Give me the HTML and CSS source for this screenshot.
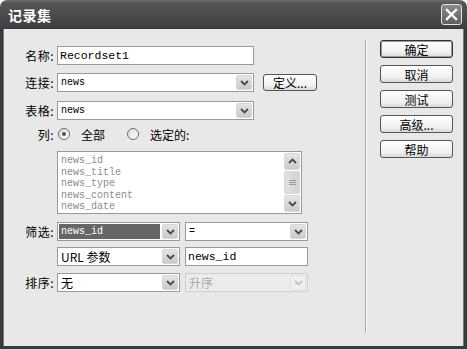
FILE: index.html
```html
<!DOCTYPE html>
<html lang="zh-CN">
<head>
    <meta charset="UTF-8">
    <title>记录集</title>
    <link rel="stylesheet" href="styles.css">
</head>
<body>
    <div class="window">
        <div class="titlebar">
            <span class="title">记录集</span>
            <span class="close">
                <svg width="13" height="13" viewBox="0 0 13 13"><path d="M2 2 L11 11 M11 2 L2 11" stroke="#fff" stroke-width="2.4" stroke-linecap="square"/></svg>
            </span>
        </div>

        <div class="body">
            <div class="form">
                <div class="row r-name">
                    <span class="lbl">名称:</span>
                    <div class="input wide"><span class="mono-lg">Recordset1</span></div>
                </div>

                <div class="row r-conn">
                    <span class="lbl">连接:</span>
                    <div class="select wide">
                        <span class="val mono">news</span>
                        <span class="arrow"><svg width="9" height="6" viewBox="0 0 9 6"><path d="M1 1 L4.5 4.5 L8 1" fill="none" stroke="#4a4a4a" stroke-width="1.8"/></svg></span>
                    </div>
                    <span class="btn define">定义...</span>
                </div>

                <div class="row r-table">
                    <span class="lbl">表格:</span>
                    <div class="select wide">
                        <span class="val mono">news</span>
                        <span class="arrow"><svg width="9" height="6" viewBox="0 0 9 6"><path d="M1 1 L4.5 4.5 L8 1" fill="none" stroke="#4a4a4a" stroke-width="1.8"/></svg></span>
                    </div>
                </div>

                <div class="row r-cols">
                    <span class="lbl">列:</span>
                    <span class="radio checked"></span>
                    <span class="rtext">全部</span>
                    <span class="radio second"></span>
                    <span class="rtext">选定的:</span>
                </div>

                <div class="row r-list">
                    <span class="lbl"></span>
                    <div class="listbox">
                        <div class="items mono">
                            <div>news_id</div>
                            <div>news_title</div>
                            <div>news_type</div>
                            <div>news_content</div>
                            <div>news_date</div>
                        </div>
                        <div class="scrollbar">
                            <span class="sb-btn"><svg width="9" height="6" viewBox="0 0 9 6"><path d="M1 5 L4.5 1.5 L8 5" fill="none" stroke="#4a4a4a" stroke-width="1.8"/></svg></span>
                            <span class="sb-thumb"><svg width="7" height="6" viewBox="0 0 7 6"><path d="M0 0.5 H7 M0 2.5 H7 M0 4.5 H7" stroke="#999" stroke-width="1"/></svg></span>
                            <span class="sb-btn sb-down"><svg width="9" height="6" viewBox="0 0 9 6"><path d="M1 1 L4.5 4.5 L8 1" fill="none" stroke="#4a4a4a" stroke-width="1.8"/></svg></span>
                        </div>
                    </div>
                </div>

                <div class="row r-filter">
                    <span class="lbl">筛选:</span>
                    <div class="select half">
                        <span class="val mono picked">news_id</span>
                        <span class="arrow"><svg width="9" height="6" viewBox="0 0 9 6"><path d="M1 1 L4.5 4.5 L8 1" fill="none" stroke="#4a4a4a" stroke-width="1.8"/></svg></span>
                    </div>
                    <div class="select half">
                        <span class="val mono">=</span>
                        <span class="arrow"><svg width="9" height="6" viewBox="0 0 9 6"><path d="M1 1 L4.5 4.5 L8 1" fill="none" stroke="#4a4a4a" stroke-width="1.8"/></svg></span>
                    </div>
                </div>

                <div class="row r-url">
                    <span class="lbl"></span>
                    <div class="select half">
                        <span class="val">URL 参数</span>
                        <span class="arrow"><svg width="9" height="6" viewBox="0 0 9 6"><path d="M1 1 L4.5 4.5 L8 1" fill="none" stroke="#4a4a4a" stroke-width="1.8"/></svg></span>
                    </div>
                    <div class="input half"><span class="mono-lg">news_id</span></div>
                </div>

                <div class="row r-sort">
                    <span class="lbl">排序:</span>
                    <div class="select half">
                        <span class="val">无</span>
                        <span class="arrow"><svg width="9" height="6" viewBox="0 0 9 6"><path d="M1 1 L4.5 4.5 L8 1" fill="none" stroke="#4a4a4a" stroke-width="1.8"/></svg></span>
                    </div>
                    <div class="select half disabled">
                        <span class="val">升序</span>
                        <span class="arrow"><svg width="9" height="6" viewBox="0 0 9 6"><path d="M1 1 L4.5 4.5 L8 1" fill="none" stroke="#c4c4c4" stroke-width="1.8"/></svg></span>
                    </div>
                </div>
            </div>

            <div class="sep"></div>

            <div class="buttons">
                <span class="btn default">确定</span>
                <span class="btn">取消</span>
                <span class="btn">测试</span>
                <span class="btn">高级...</span>
                <span class="btn">帮助</span>
            </div>
        </div>
    </div>
</body>
</html>
```

FILE: styles.css
```css
* {
    margin: 0;
    padding: 0;
    box-sizing: border-box;
}

body {
    font-family: "Noto Sans CJK SC", "Liberation Sans", sans-serif;
    font-size: 12px;
    line-height: 1;
    color: #000;
    background: #fff;
}

.window {
    width: 467px;
    height: 349px;
    display: flex;
    flex-direction: column;
}

/* title bar */
.titlebar {
    height: 29px;
    flex: none;
    display: flex;
    align-items: center;
    justify-content: space-between;
    padding: 0 5px 0 8px;
    border-radius: 7px 7px 0 0;
    background: linear-gradient(#6e6e6e 0%, #555 12%, #4b4b4b 50%, #3f3f3f 100%);
    border-bottom: 1px solid #3a3a3a;
}

.title {
    color: #fff;
    font-weight: bold;
    font-size: 14px;
    padding-top: 2px;
    letter-spacing: 0.5px;
}

.close {
    width: 21px;
    height: 21px;
    border: 1px solid #e4e4e4;
    border-radius: 3px;
    background: linear-gradient(#8a8a8a, #5e5e5e);
    display: flex;
    align-items: center;
    justify-content: center;
    margin-top: 1px;
}

/* dialog body */
.body {
    flex: 1;
    display: flex;
    background: #e8e8e8;
    border: 3px solid #3a3a3a;
    border-top: none;
    box-shadow: inset 1px 0 0 #7a7a7a, inset -1px 0 0 #7a7a7a;
}

.form {
    width: 362px;
    flex: none;
    padding-top: 17px;
}

.row {
    display: flex;
    align-items: center;
    height: 19px;
}

.r-conn { margin-top: 8px; }
.r-table { margin-top: 9px; }
.r-cols { margin-top: 6px; height: 16px; }
.r-list { margin-top: 9px; height: 63px; align-items: stretch; }
.r-filter { margin-top: 8px; }
.r-url { margin-top: 6px; }
.r-sort { margin-top: 7px; }

.lbl {
    width: 51px;
    margin-right: 3px;
    text-align: right;
    flex: none;
    padding-top: 1px;
    letter-spacing: 0.5px;
}

.mono {
    font-family: "Liberation Mono", monospace;
    font-size: 10px;
}

.mono-lg {
    font-family: "Liberation Mono", monospace;
    font-size: 11.5px;
}

.input,
.select {
    height: 19px;
    background: #fff;
    border: 1px solid #9a9a9a;
    display: flex;
    align-items: center;
}

.input {
    padding-left: 2px;
}

.wide { width: 197px; }
.half { width: 123px; }
.half + .half { margin-left: 5px; }

.select .val {
    flex: 1;
    padding-left: 2px;
    align-self: stretch;
    display: flex;
    align-items: center;
    margin: 1px 2px 1px 1px;
}

.select .val.picked {
    background: #666;
    color: #fff;
}

.arrow {
    width: 16px;
    height: 15px;
    margin-right: 1px;
    border-radius: 2px;
    background: linear-gradient(#e4e4e4, #c9c9c9);
    border: 1px solid #d6d6d6;
    display: flex;
    align-items: center;
    justify-content: center;
    flex: none;
}

.select.disabled {
    background: #ececec;
    border-color: #cfcfcf;
    color: #a8a8a8;
}

.select.disabled .arrow {
    background: #f0f0f0;
    border-color: #e0e0e0;
}

/* radio row */
.radio {
    width: 12px;
    height: 12px;
    border: 1px solid #6c6c6c;
    border-radius: 50%;
    background: linear-gradient(135deg, #dcdcdc, #fff);
    flex: none;
    position: relative;
    margin-left: 1px;
}

.radio.checked::after {
    content: '';
    position: absolute;
    left: 3px;
    top: 3px;
    width: 4px;
    height: 4px;
    border-radius: 50%;
    background: #555;
}

.radio.second {
    margin-left: 22px;
}

.rtext {
    margin-left: 11px;
    padding-top: 1px;
}

/* list box */
.listbox {
    width: 245px;
    border: 1px solid #9a9a9a;
    background: #fff;
    display: flex;
    padding: 1px;
}

.items {
    flex: 1;
    color: #8c8c8c;
    padding: 2px 0 0 2px;
    line-height: 11.6px;
}

.scrollbar {
    width: 16px;
    display: flex;
    flex-direction: column;
    gap: 1px;
}

.sb-btn,
.sb-thumb {
    height: 17px;
    border-radius: 2px;
    border: 1px solid #d8d8d8;
    background: linear-gradient(#e6e6e6, #cbcbcb);
    display: flex;
    align-items: center;
    justify-content: center;
}

.sb-thumb {
    height: 24px;
    background: linear-gradient(90deg, #e2e2e2, #d2d2d2);
}

.sb-down {
    margin-top: auto;
}

/* separator and buttons */
.sep {
    width: 2px;
    height: 293px;
    margin-top: 11px;
    border-left: 1px solid #a8a8a8;
    border-right: 1px solid #fff;
    flex: none;
}

.buttons {
    margin-left: 13px;
    padding-top: 11px;
    display: flex;
    flex-direction: column;
    gap: 7px;
}

.btn {
    width: 73px;
    height: 18px;
    border: 1px solid #555;
    border-radius: 3px;
    background: linear-gradient(#fff, #f0f0f0 70%, #d9d9d9);
    display: flex;
    align-items: center;
    justify-content: center;
    padding-top: 1px;
}

.btn.default {
    border-color: #333;
    box-shadow: inset 0 0 0 1px #9a9a9a;
}

.btn.define {
    width: 54px;
    height: 17px;
    margin-left: 9px;
}
```
